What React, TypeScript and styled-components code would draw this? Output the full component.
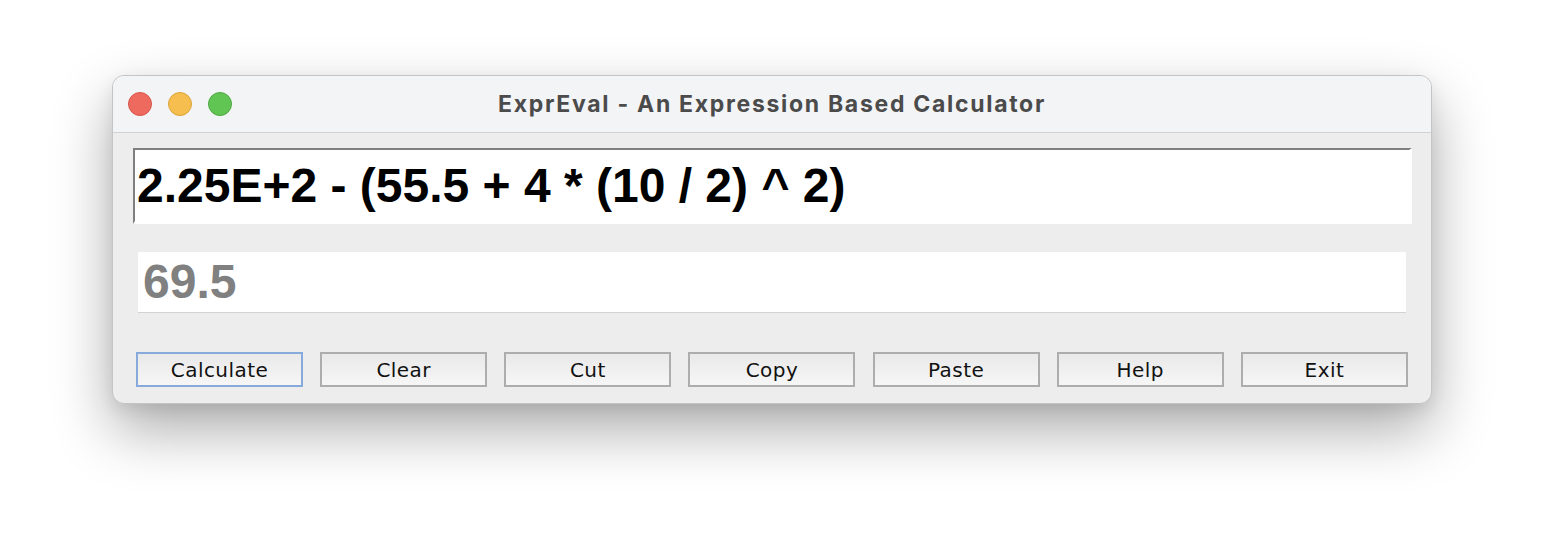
import React from 'react'
import styled, { createGlobalStyle } from 'styled-components'

const GlobalStyle = createGlobalStyle`
  html, body {
    margin: 0;
    padding: 0;
    background: #ffffff;
  }
`

const Page = styled.div`
  width: 1544px;
  height: 552px;
  padding: 75px 0 0 112px;
  box-sizing: border-box;
  overflow: hidden;
`

const Window = styled.div`
  width: 1320px;
  height: 329px;
  box-sizing: border-box;
  border: 1px solid #c4c4c4;
  border-radius: 12px;
  background: #ededed;
  overflow: hidden;
  display: flex;
  flex-direction: column;
  box-shadow: 0 26px 60px rgba(0, 0, 0, 0.33), 0 6px 16px rgba(0, 0, 0, 0.08);
`

const TitleBar = styled.div`
  position: relative;
  height: 56px;
  flex: none;
  background: #f3f4f6;
  border-bottom: 1px solid #d2d2d2;
  display: flex;
  align-items: center;
  justify-content: center;
`

const Lights = styled.div`
  position: absolute;
  left: 15px;
  top: 16px;
  display: flex;
  gap: 16px;
`

const Light = styled.span<{ $fill: string; $edge: string }>`
  width: 24px;
  height: 24px;
  box-sizing: border-box;
  border-radius: 50%;
  background: ${p => p.$fill};
  border: 1px solid ${p => p.$edge};
`

const Title = styled.div`
  font-family: Inter, 'Liberation Sans', sans-serif;
  font-weight: 700;
  font-size: 23px;
  color: #4b4b4b;
  letter-spacing: 1.7px;
`

const Content = styled.div`
  display: flex;
  flex-direction: column;
  padding: 15px 19px 0 20px;
`

const Expression = styled.div`
  height: 76px;
  box-sizing: border-box;
  background: #ffffff;
  border-style: solid;
  border-width: 2px 3px 3px 2px;
  border-color: #7f7f7f #ffffff #ffffff #7f7f7f;
  padding-left: 2px;
  font-family: 'Liberation Sans', Arial, sans-serif;
  font-weight: 700;
  font-size: 48px;
  line-height: 71px;
  color: #000000;
  white-space: nowrap;
`

const Result = styled.div`
  margin: 28px 6px 0 5px;
  height: 61px;
  box-sizing: border-box;
  background: #ffffff;
  border-bottom: 1px solid #d3d3d3;
  padding-left: 5px;
  font-family: 'Liberation Sans', Arial, sans-serif;
  font-weight: 700;
  font-size: 48px;
  line-height: 59px;
  color: #808080;
`

const ButtonRow = styled.div`
  margin: 39px 4px 0 3px;
  display: flex;
  justify-content: space-between;
`

const Button = styled.button<{ $focused?: boolean }>`
  width: 167px;
  height: 35px;
  box-sizing: border-box;
  margin: 0;
  padding: 0;
  border: 2px solid ${p => (p.$focused ? '#86aadc' : '#adadad')};
  border-radius: 0;
  background: linear-gradient(#e9e9e9, #f6f6f6);
  font-family: 'DejaVu Sans', 'Liberation Sans', sans-serif;
  font-size: 20px;
  letter-spacing: 0.45px;
  color: #111111;
  display: flex;
  align-items: center;
  justify-content: center;
`

const buttons = ['Calculate', 'Clear', 'Cut', 'Copy', 'Paste', 'Help', 'Exit']

const App: React.FC = () => (
  <>
    <GlobalStyle />
    <Page>
      <Window>
        <TitleBar>
          <Lights>
            <Light $fill="#ee6a5e" $edge="#d65549" />
            <Light $fill="#f6be4f" $edge="#dca33a" />
            <Light $fill="#61c554" $edge="#4ea93f" />
          </Lights>
          <Title>ExprEval - An Expression Based Calculator</Title>
        </TitleBar>
        <Content>
          <Expression>2.25E+2 - (55.5 + 4 * (10 / 2) ^ 2)</Expression>
          <Result>69.5</Result>
          <ButtonRow>
            {buttons.map((label, i) => (
              <Button key={label} $focused={i === 0}>
                {label}
              </Button>
            ))}
          </ButtonRow>
        </Content>
      </Window>
    </Page>
  </>
)

export default App
